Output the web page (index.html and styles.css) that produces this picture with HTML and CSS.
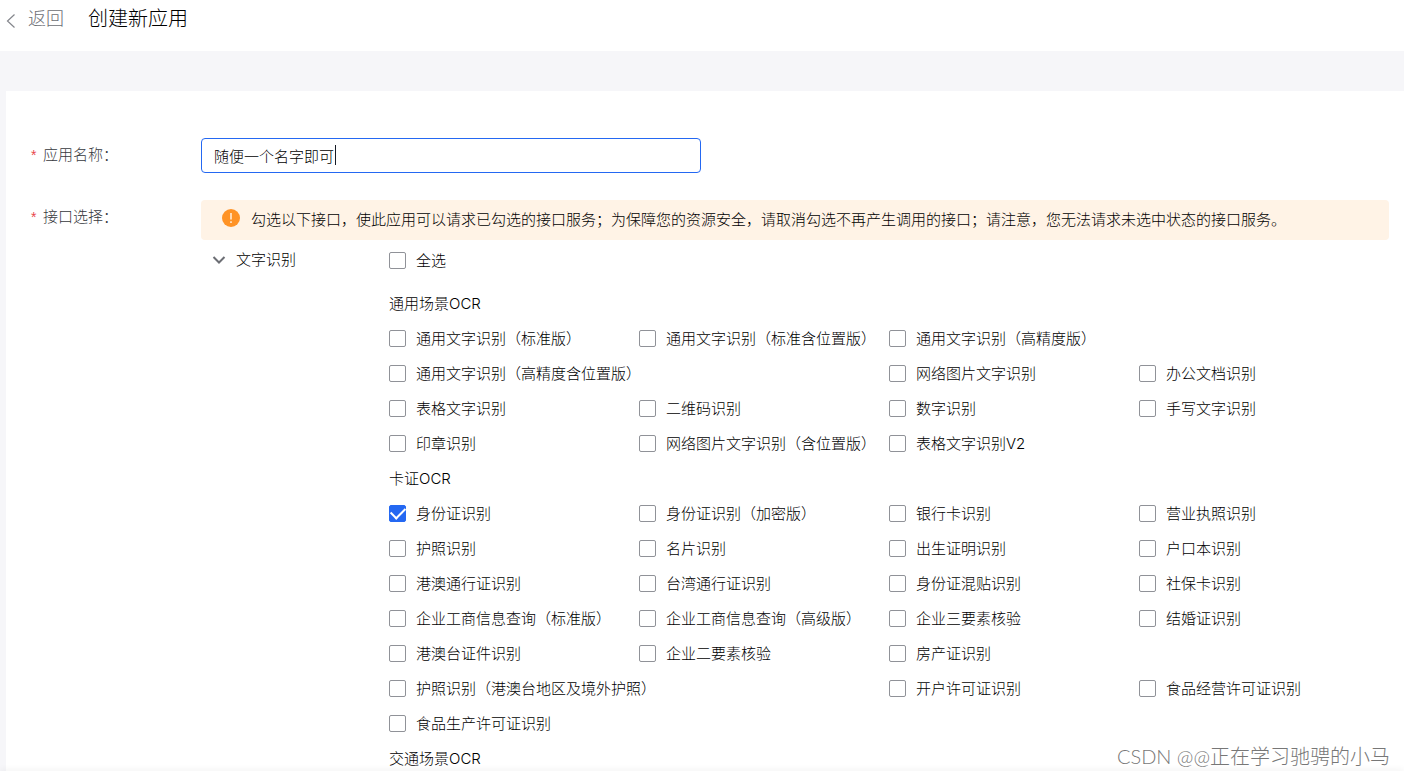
FILE: index.html
```
<!DOCTYPE html>
<html lang="zh-CN">
<head>
<meta charset="utf-8">
<title>创建新应用</title>
<link rel="stylesheet" href="styles.css">
</head>
<body>
<header class="topbar">
  <a class="back" href="#">
    <svg class="back-icon" viewBox="0 0 10 16" aria-hidden="true"><path d="M8.500 1.500L1.500 8l7 6.500"/></svg>
    <span>返回</span>
  </a>
  <h1 class="page-title">创建新应用</h1>
</header>
<main class="card">
  <form class="form">
    <div class="row row-name">
      <label class="label" for="app-name"><span class="star">*</span>应用名称：</label>
      <div class="field">
        <input class="text-input" id="app-name" type="text" value="随便一个名字即可">
        <span class="caret"></span>
      </div>
    </div>
    <div class="row">
      <div class="label" id="api-label"><span class="star">*</span>接口选择：</div>
      <div class="apis" role="group" aria-labelledby="api-label">
        <div class="notice">
          <svg class="notice-icon" viewBox="0 0 18 18" aria-hidden="true"><circle cx="9" cy="9" r="9"/><path d="M9 4v6.500M9 12.300v1.600"/></svg>
          <p class="notice-text">勾选以下接口，使此应用可以请求已勾选的接口服务；为保障您的资源安全，请取消勾选不再产生调用的接口；请注意，您无法请求未选中状态的接口服务。</p>
        </div>
        <div class="category">
          <button class="category-toggle" type="button">
            <svg class="chevron" viewBox="0 0 14 10" aria-hidden="true"><path d="M1.500 2L7 7.500 12.500 2"/></svg>
            <span>文字识别</span>
          </button>
          <div class="options">
            <label class="option option-all"><input class="check" type="checkbox">全选</label>
            <h2 class="group-title">通用场景OCR</h2>
            <div class="grid">
              <label class="option"><input class="check" type="checkbox">通用文字识别（标准版）</label>
              <label class="option"><input class="check" type="checkbox">通用文字识别（标准含位置版）</label>
              <label class="option"><input class="check" type="checkbox">通用文字识别（高精度版）</label>
              <label class="option wide"><input class="check" type="checkbox">通用文字识别（高精度含位置版）</label>
              <label class="option"><input class="check" type="checkbox">网络图片文字识别</label>
              <label class="option"><input class="check" type="checkbox">办公文档识别</label>
              <label class="option"><input class="check" type="checkbox">表格文字识别</label>
              <label class="option"><input class="check" type="checkbox">二维码识别</label>
              <label class="option"><input class="check" type="checkbox">数字识别</label>
              <label class="option"><input class="check" type="checkbox">手写文字识别</label>
              <label class="option"><input class="check" type="checkbox">印章识别</label>
              <label class="option"><input class="check" type="checkbox">网络图片文字识别（含位置版）</label>
              <label class="option"><input class="check" type="checkbox">表格文字识别V2</label>
            </div>
            <h2 class="group-title">卡证OCR</h2>
            <div class="grid">
              <label class="option"><input class="check" type="checkbox" checked>身份证识别</label>
              <label class="option"><input class="check" type="checkbox">身份证识别（加密版）</label>
              <label class="option"><input class="check" type="checkbox">银行卡识别</label>
              <label class="option"><input class="check" type="checkbox">营业执照识别</label>
              <label class="option"><input class="check" type="checkbox">护照识别</label>
              <label class="option"><input class="check" type="checkbox">名片识别</label>
              <label class="option"><input class="check" type="checkbox">出生证明识别</label>
              <label class="option"><input class="check" type="checkbox">户口本识别</label>
              <label class="option"><input class="check" type="checkbox">港澳通行证识别</label>
              <label class="option"><input class="check" type="checkbox">台湾通行证识别</label>
              <label class="option"><input class="check" type="checkbox">身份证混贴识别</label>
              <label class="option"><input class="check" type="checkbox">社保卡识别</label>
              <label class="option"><input class="check" type="checkbox">企业工商信息查询（标准版）</label>
              <label class="option"><input class="check" type="checkbox">企业工商信息查询（高级版）</label>
              <label class="option"><input class="check" type="checkbox">企业三要素核验</label>
              <label class="option"><input class="check" type="checkbox">结婚证识别</label>
              <label class="option"><input class="check" type="checkbox">港澳台证件识别</label>
              <label class="option"><input class="check" type="checkbox">企业二要素核验</label>
              <label class="option"><input class="check" type="checkbox">房产证识别</label>
              <label class="option wide"><input class="check" type="checkbox">护照识别（港澳台地区及境外护照）</label>
              <label class="option"><input class="check" type="checkbox">开户许可证识别</label>
              <label class="option"><input class="check" type="checkbox">食品经营许可证识别</label>
              <label class="option"><input class="check" type="checkbox">食品生产许可证识别</label>
            </div>
            <h2 class="group-title">交通场景OCR</h2>
          </div>
        </div>
      </div>
    </div>
  </form>
</main>
<div class="bottom-bar"></div>
<div class="watermark">CSDN @@正在学习驰骋的小马</div>
</body>
</html>
```
FILE: styles.css
```
* {
  box-sizing: border-box;
}

body {
  margin: 0;
  height: 100vh;
  overflow: hidden;
  display: flex;
  flex-direction: column;
  background: #f6f6f9;
  color: #000;
  font: 300 15px/20px Inter, "Noto Sans CJK SC", sans-serif;
}

/* Header */
.topbar {
  flex: none;
  display: flex;
  align-items: flex-start;
  gap: 24px;
  height: 51px;
  padding: 7px 6px;
  background: #fff;
  line-height: 24px;
}

.back {
  display: flex;
  align-items: center;
  gap: 12px;
  color: #6c6e74;
  font-size: 18px;
  text-decoration: none;
}

.back-icon {
  width: 10px;
  height: 16px;
  margin-top: 3px;
  fill: none;
  stroke: #84868c;
  stroke-width: 1.2;
}

.page-title {
  margin: 0;
  font-size: 20px;
  font-weight: 300;
}

/* Form */
.card {
  flex: 1;
  min-height: 0;
  overflow: hidden;
  margin: 40px 0 0 6px;
  padding: 47px 15px 0 24px;
  background: #fff;
}

.form {
  display: flex;
  flex-direction: column;
  gap: 27px;
}

.row {
  display: grid;
  grid-template-columns: 171px 1fr;
}

.label {
  padding-top: 7px;
  color: #36383d;
}

.star {
  display: inline-block;
  width: 13px;
  padding-left: 1px;
  color: #e8474c;
  font-family: "Liberation Sans", sans-serif;
  font-size: 14px;
}

.field {
  position: relative;
  max-width: 500px;
}

.text-input {
  display: block;
  width: 100%;
  height: 35px;
  padding: 0 12px;
  border: 1px solid #2468f2;
  border-radius: 4px;
  outline: none;
  background: #fff;
  color: #000;
  font: inherit;
}

.caret {
  position: absolute;
  left: 134px;
  top: 7px;
  width: 1px;
  height: 20px;
  background: #151b26;
}

.notice {
  display: flex;
  gap: 11px;
  padding: 10px 21px;
  border-radius: 4px;
  background: #fff3e6;
}

.notice-icon {
  flex: none;
  width: 18px;
  height: 18px;
  margin-top: -1px;
  fill: #ff9326;
}

.notice-icon path {
  stroke: #fff;
  stroke-width: 1.3;
}

.notice-text {
  margin: 0;
}

.category {
  display: grid;
  grid-template-columns: 187px 1fr;
  padding-top: 3px;
}

.category-toggle {
  display: flex;
  align-items: center;
  align-self: start;
  gap: 10px;
  height: 34px;
  padding: 0 0 0 11px;
  border: 0;
  background: none;
  color: inherit;
  font: inherit;
}

.chevron {
  width: 14px;
  height: 10px;
  fill: none;
  stroke: #6c6e74;
  stroke-width: 2;
}

.options {
  padding-left: 1px;
}

.option {
  display: flex;
  align-items: center;
  gap: 10px;
  height: 35px;
  white-space: nowrap;
}

.option-all {
  margin-bottom: 8px;
}

.wide {
  grid-column: span 2;
}

.grid {
  display: grid;
  grid-template-columns: repeat(4, 1fr);
}

.group-title {
  height: 35px;
  margin: 0;
  font-size: 15px;
  font-weight: 300;
  line-height: 36px;
}

.check {
  appearance: none;
  flex: none;
  display: grid;
  place-items: center;
  width: 17px;
  height: 17px;
  margin: 0;
  border: 1px solid #909298;
  border-radius: 2px;
  background: #fff;
}

.check:checked {
  border-color: #2468f2;
  background: #2468f2;
}

.check:checked::before {
  content: "";
  width: 12px;
  height: 7px;
  margin-bottom: 4px;
  border: solid #fff;
  border-width: 0 0 2px 2px;
  transform: rotate(-45deg);
}

.bottom-bar {
  flex: none;
  height: 3px;
  background: #fff;
  box-shadow: 0 -1px 6px rgba(0, 0, 0, 0.08);
}

.watermark {
  position: absolute;
  right: 14px;
  bottom: 5px;
  color: #777;
  font-family: Lato, "Noto Sans CJK SC", sans-serif;
  font-size: 20px;
  line-height: 26px;
}
```
